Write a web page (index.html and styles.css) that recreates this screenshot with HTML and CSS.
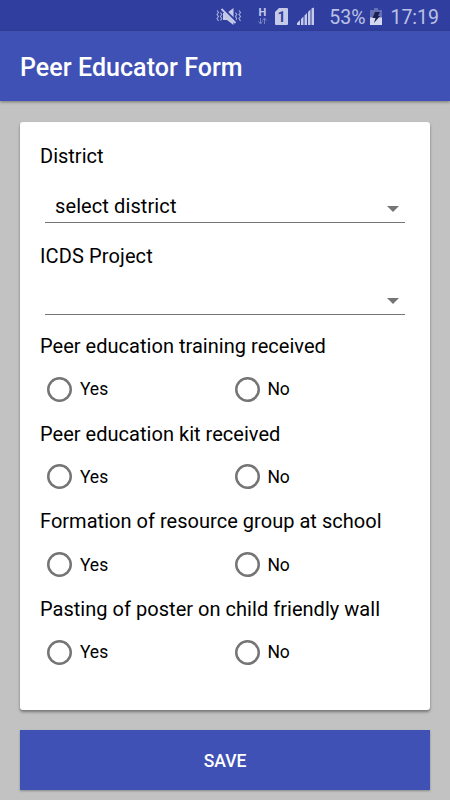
FILE: index.html
```html
<!DOCTYPE html>
<html lang="en">
<head>
  <meta charset="UTF-8" />
  <title>Peer Educator Form</title>
  <meta name="viewport" content="width=device-width, initial-scale=1.0" />
  <link rel="stylesheet" href="styles.css">
</head>
<body>

<div class="status-bar">
  <svg class="icons" viewBox="0 0 102 31" width="102" height="31">
    <!-- vibrate / mute -->
    <path d="M4 10.500l1.500 2-1.500 2 1.500 2-1.500 2 1.500 2.500M7.500 12.500l1.200 2-1.200 2 1.200 2-1.200 2M22.500 12.500l1.200 2-1.200 2 1.200 2-1.200 2M26 10.500l1.500 2-1.500 2 1.500 2-1.500 2 1.500 2.500" fill="none" stroke="#a7aedb" stroke-width="1.1"/>
    <path d="M10 13h4l6.500-5v17L14 20h-4z" fill="#c5cae9"/>
    <path d="M9.500 8.500l13 13" stroke="#303f9f" stroke-width="3.200"/>
    <path d="M8.500 9l14 14" stroke="#c5cae9" stroke-width="1.8"/>
    <!-- network -->
    <text x="45.500" y="16" class="net">H</text>
    <path d="M47.500 18v5.500M45.500 21.500l2 2.500 2-2.500M51.500 24v-5.500M49.500 20.500l2-2.500 2 2.500" stroke="#7a84c5" fill="none"/>
    <path d="M66 8h8q1 0 1 1v15q0 1-1 1H63q-1 0-1-1V12z" fill="#c5cae9"/>
    <text x="64.500" y="21.500" class="sim">1</text>
    <path d="M84 25v-2l3-3v5zM88 25v-6l2.500-2.500V25zM91.500 25V15.500L94 13v12zM95 25V12l2.500-2.500V25zM98.500 25V8.500l2.500-1V25z" fill="#c5cae9"/>
  </svg>
  <span class="percent">53%</span>
  <svg class="battery" viewBox="0 0 12 18" width="12" height="18">
    <path d="M4 0h4v2h4v8H0V2h4z" fill="#6570b8"/>
    <path d="M0 9.500h12V17H0z" fill="#d5d9f0"/>
    <path d="M5 4h5L8 8h2l-6 7 1.500-5H2.500z" fill="#1b224f"/>
  </svg>
  <span class="time">17:19</span>
</div>

<header class="app-bar">
  <h1>Peer Educator Form</h1>
</header>

<main>
  <form class="card">
    <div class="field">
      <label>District</label>
      <div class="spinner">select district</div>
    </div>
    <div class="field project">
      <label>ICDS Project</label>
      <div class="spinner"></div>
    </div>

    <div class="question">
      <p>Peer education training received</p>
      <div class="options">
        <label><input type="radio" name="training">Yes</label>
        <label><input type="radio" name="training">No</label>
      </div>
    </div>
    <div class="question">
      <p>Peer education kit received</p>
      <div class="options">
        <label><input type="radio" name="kit">Yes</label>
        <label><input type="radio" name="kit">No</label>
      </div>
    </div>
    <div class="question">
      <p>Formation of resource group at school</p>
      <div class="options">
        <label><input type="radio" name="group">Yes</label>
        <label><input type="radio" name="group">No</label>
      </div>
    </div>
    <div class="question">
      <p>Pasting of poster on child friendly wall</p>
      <div class="options">
        <label><input type="radio" name="poster">Yes</label>
        <label><input type="radio" name="poster">No</label>
      </div>
    </div>
  </form>
  <button class="save" type="button">SAVE</button>
</main>

</body>
</html>
```

FILE: styles.css
```css
* {
  box-sizing: border-box;
  margin: 0;
  padding: 0;
}

body {
  height: 800px;
  font-family: Roboto, sans-serif;
  font-size: 20px;
  color: #000;
  background: #c2c2c2;
  overflow: hidden;
}

.status-bar {
  display: flex;
  align-items: center;
  justify-content: flex-end;
  height: 31px;
  padding-right: 11px;
  background: #303f9f;
  color: #bcc2e5;
  font-size: 19.5px;
}

.icons {
  margin-right: 14px;
}

.net {
  font: bold 11px Roboto, sans-serif;
  fill: #c5cae9;
}

.sim {
  font: bold 14px Roboto, sans-serif;
  fill: #303f9f;
}

.percent,
.time {
  line-height: 31px;
  padding-top: 3px;
}

.battery {
  margin: 3px 8px 0 5px;
}

.app-bar {
  display: flex;
  align-items: center;
  height: 70px;
  padding-left: 20px;
  background: #3f51b5;
  box-shadow: 0 1px 3px rgba(0,0,0,0.4);
}

h1 {
  font-size: 25px;
  font-weight: 500;
  letter-spacing: 0.06px;
  color: #fff;
  padding-top: 2px;
}

main {
  padding: 21px 20px 0;
}

.card {
  height: 588px;
  padding: 21px 20px 0;
  background: #fff;
  border-radius: 3px;
  box-shadow: 0 2px 3px rgba(0,0,0,0.4);
}

.field {
  height: 100px;
  line-height: 26px;
}

.field.project {
  height: 90px;
  letter-spacing: 0.12px;
}

.field > label {
  display: block;
}

.spinner {
  display: flex;
  align-items: center;
  height: 33px;
  margin: 21px 5px 0;
  padding: 0 6.5px 0 10px;
  border-bottom: 1px solid #757575;
  letter-spacing: 0.1px;
}

.project .spinner {
  margin-top: 13px;
}

.spinner::after {
  content: "";
  margin: 5px 0 0 auto;
  border: 6px solid transparent;
  border-top-color: #757575;
  border-bottom: 0;
}

.project .spinner::after {
  margin-top: 6px;
}

.question {
  height: 87.6px;
  line-height: 26px;
  letter-spacing: 0.03px;
}

.options {
  display: grid;
  grid-template-columns: 187.5px 1fr;
  padding: 17.4px 0 0 7.4px;
  font-size: 17.5px;
  letter-spacing: 0;
}

.options label {
  display: flex;
  align-items: center;
  height: 26px;
}

.options input {
  appearance: none;
  width: 25px;
  height: 25px;
  margin-right: 7.5px;
  border-radius: 50%;
  box-shadow: inset 0 0 0 2.5px #757575;
}

.save {
  display: block;
  width: 100%;
  height: 60px;
  margin-top: 20px;
  padding-top: 1px;
  border: 0;
  background: #3f51b5;
  color: #fff;
  font: 500 17.5px Roboto, sans-serif;
  box-shadow: 0 1px 2px rgba(0,0,0,0.3);
}
```
